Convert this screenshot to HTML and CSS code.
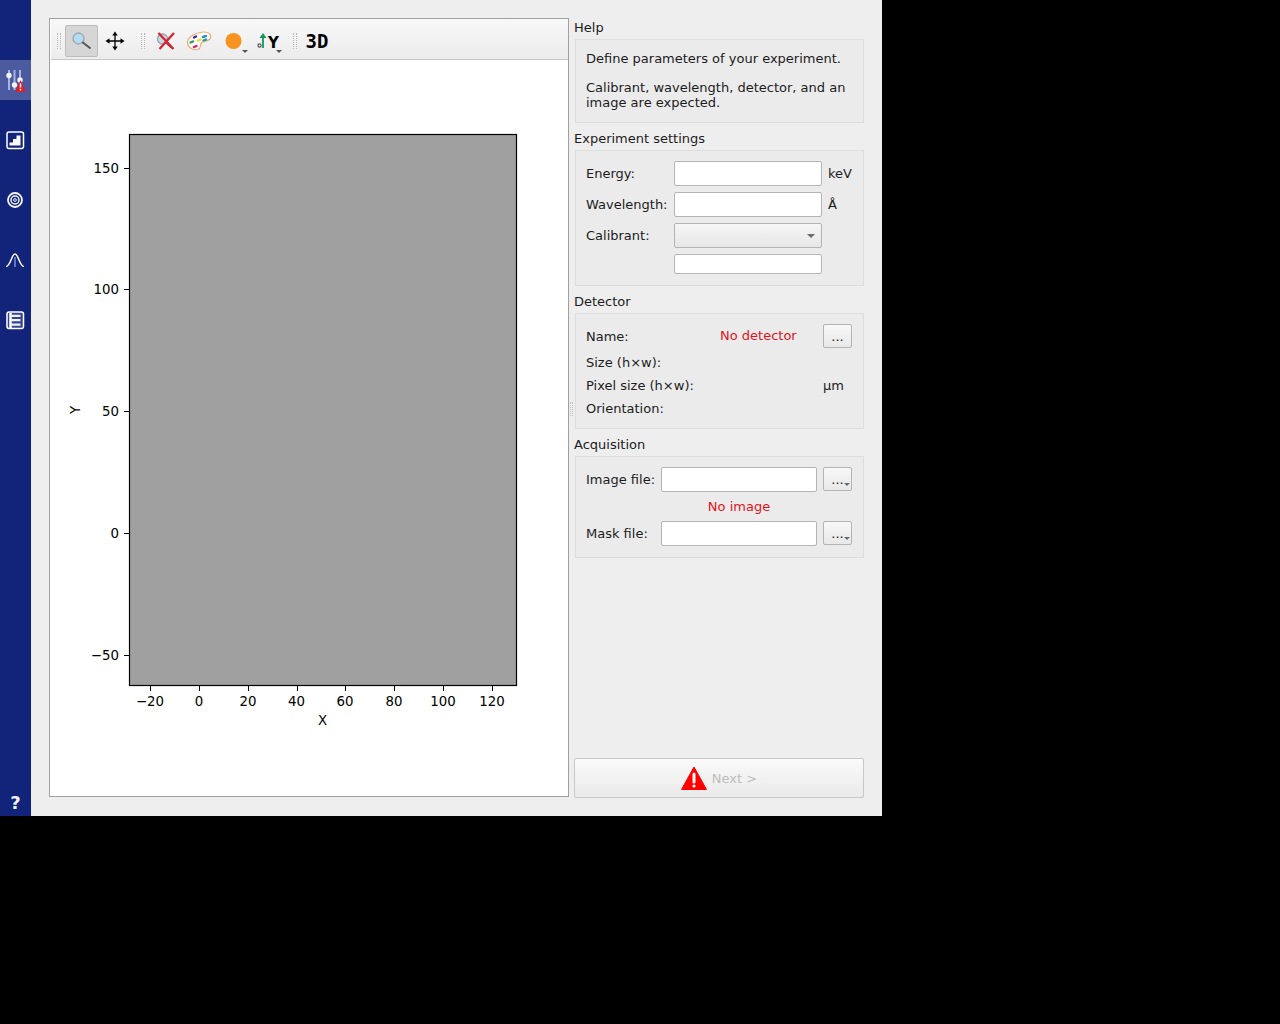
FILE: index.html
```html
<!DOCTYPE html>
<html lang="en">
<head>
<meta charset="utf-8">
<title>Experiment settings</title>
<link rel="stylesheet" href="styles.css">
</head>
<body>
<div class="app">
  <nav class="sidebar">
    <div class="nav-item active">
      <svg width="31" height="40" viewBox="0 0 31 40"><path d="M9 10V30M14.500 10V30M20 10V24" fill="none" stroke="#aab4e0" stroke-width="2"/><g fill="#f2f4fc"><circle cx="9" cy="15.500" r="2.700"/><circle cx="14.500" cy="25" r="2.700"/><circle cx="20" cy="20" r="2.700"/></g><path d="M20.500 20L26 32H15Z" fill="#d8202a"/><path d="M20.500 23.500V27.500M20.500 28.800V30.500" stroke="#fff" stroke-width="1.500"/></svg>
    </div>
    <div class="nav-item">
      <svg width="31" height="40" viewBox="0 0 31 40"><rect x="7" y="12" width="16.500" height="16.500" rx="2" fill="none" stroke="#fff" stroke-width="1.500"/><path d="M9.500 25.500V22.500H13V19H16.500V15.500H20.500V25.500Z" fill="#fff"/></svg>
    </div>
    <div class="nav-item">
      <svg width="31" height="40" viewBox="0 0 31 40"><g fill="none" stroke="#f4f5fc"><circle cx="15" cy="20" r="7" stroke-width="1.800"/><circle cx="15" cy="20" r="4" stroke-width="1.500"/><circle cx="15" cy="20" r="1.400" stroke-width="1"/></g></svg>
    </div>
    <div class="nav-item">
      <svg width="31" height="40" viewBox="0 0 31 40"><path d="M15 17V27" stroke="#8090d0" stroke-width="1.500"/><path d="M6 26.500C10.500 26.500 11.500 14 15 14C18.500 14 19.500 26.500 24 26.500" fill="none" stroke="#fff" stroke-width="1.500"/></svg>
    </div>
    <div class="nav-item">
      <svg width="31" height="40" viewBox="0 0 31 40"><rect x="7" y="12" width="16.500" height="16.500" rx="2" fill="#34458f" stroke="#fff" stroke-width="1.500"/><path d="M10.500 13V28" stroke="#fff" stroke-width="2.500"/><path d="M11 15.800H20.500M11 20.200H20.500M11 24.600H20.500" stroke="#f0f2fb" stroke-width="2.200"/></svg>
    </div>
    <div class="help-mark">?</div>
  </nav>

  <main class="workspace">
    <section class="plot-frame">
      <div class="toolbar">
        <span class="handle first"></span>
        <span class="tool pressed">
          <svg width="22" height="22" viewBox="0 0 22 22"><circle cx="7.500" cy="8.500" r="5.500" fill="#b4dcf2" stroke="#9aa6ae" stroke-width="1.300"/><path d="M11.800 12.500L19 18" stroke="#555" stroke-width="2" stroke-linecap="round"/></svg>
        </span>
        <span class="tool">
          <svg width="22" height="22" viewBox="1 0 22 22"><path d="M11 3.500V18.500M3.500 11H18.500" stroke="#000" stroke-width="1.300"/><path d="M11 1.500L8.300 5.500H13.700ZM11 20.500L8.300 16.500H13.700ZM1.500 11L5.500 8.300V13.700ZM20.500 11L16.500 8.300V13.700Z" fill="#000"/></svg>
        </span>
        <span class="handle"></span>
        <span class="tool">
          <svg width="22" height="22" viewBox="0 0 22 22"><circle cx="7.500" cy="9" r="5" fill="#c6dbe8" stroke="#9aa3aa" stroke-width="1.300"/><path d="M11.500 13L17 18" stroke="#555" stroke-width="2"/><path d="M3.500 3L18.500 19M19 3L4.500 19" stroke="#d8232f" stroke-width="2.300"/></svg>
        </span>
        <span class="tool">
          <svg width="26" height="20" viewBox="1 0 26 20"><path d="M1.500 12C1 7 9 1.500 17 1C23 .7 25.500 3.500 24.500 7C23.500 10.500 18 9.500 15.500 12C13.500 14 15.500 17 12 18.500C7.500 19.500 2 17 1.500 12Z" fill="#fffdf8" stroke="#eaa76f" stroke-width="1.100"/><g stroke-width="2.400" stroke-linecap="round"><path d="M8 6.500L10 5.500" stroke="#3a2a9c"/><path d="M17 6L20 5" stroke="#2a8fd0"/><path d="M12 9.500L14.500 8.500" stroke="#e8dc20"/><path d="M4.500 11.500L7 10.500" stroke="#20a060"/><path d="M17.500 9.500L20 8.500" stroke="#20a0a0"/><path d="M8 16L10.500 15" stroke="#d02070"/></g></svg>
        </span>
        <span class="tool">
          <svg width="33" height="32" viewBox="0 0 33 32"><circle cx="16.500" cy="16" r="8" fill="#f7931e"/><path d="M25 25H31L28 28Z" fill="#555"/></svg>
        </span>
        <span class="tool">
          <svg width="33" height="32" viewBox="0 0 33 32"><path d="M12 12V23" stroke="#0e9a58" stroke-width="1.800"/><path d="M12 8L8.500 13H15.500Z" fill="#0e9a58"/><circle cx="8.500" cy="20.500" r="1.600" fill="none" stroke="#555" stroke-width="1.200"/><text class="axis-y" x="17" y="23">Y</text><path d="M25 25H31L28 28Z" fill="#555"/></svg>
        </span>
        <span class="handle last"></span>
        <span class="tool-3d">3D</span>
      </div>
      <svg class="plot" width="518" height="736" viewBox="50 60 518 736">
        <rect x="129.500" y="134.500" width="387" height="551" fill="#a0a0a0" stroke="#000" stroke-width="1.200"/>
        <g stroke="#000" stroke-width="1">
          <path d="M150.500 686V691M199.500 686V691M248.500 686V691M297.500 686V691M345.500 686V691M394.500 686V691M443.500 686V691M492.500 686V691"/>
          <path d="M124 168.500H129M124 289.500H129M124 411.500H129M124 533.500H129M124 655.500H129"/>
        </g>
        <g class="tick-x">
          <text x="150" y="706">−20</text><text x="199" y="706">0</text><text x="248" y="706">20</text><text x="296.500" y="706">40</text><text x="345" y="706">60</text><text x="394" y="706">80</text><text x="443" y="706">100</text><text x="492" y="706">120</text>
        </g>
        <g class="tick-y">
          <text x="119" y="173">150</text><text x="119" y="294">100</text><text x="119" y="416">50</text><text x="119" y="538">0</text><text x="119" y="660">−50</text>
        </g>
        <text class="tick-x" x="322.500" y="725">X</text>
        <text class="tick-x" transform="translate(80 410) rotate(-90)">Y</text>
      </svg>
    </section>

    <div class="splitter"><span class="grip"></span></div>

    <aside class="panel">
      <h2 class="group-title">Help</h2>
      <div class="group help-box">
        <p>Define parameters of your experiment.</p>
        <p>Calibrant, wavelength, detector, and an image are expected.</p>
      </div>

      <h2 class="group-title">Experiment settings</h2>
      <div class="group exp-grid">
        <span>Energy:</span><input class="field"><span>keV</span>
        <span>Wavelength:</span><input class="field"><span>Å</span>
        <span>Calibrant:</span><div class="combo"><i class="caret"></i></div><span></span>
        <span></span><input class="field short"><span></span>
      </div>

      <h2 class="group-title">Detector</h2>
      <div class="group detector">
        <div class="det-row first-row"><span class="det-label">Name:</span><span class="error det-value">No detector</span><button class="dots">...</button></div>
        <div class="det-row"><span class="det-label">Size (h×w):</span></div>
        <div class="det-row"><span class="det-label">Pixel size (h×w):</span><span class="det-value"></span><span class="det-unit">µm</span></div>
        <div class="det-row"><span class="det-label">Orientation:</span></div>
      </div>

      <h2 class="group-title">Acquisition</h2>
      <div class="group acq-grid">
        <span>Image file:</span><input class="field"><button class="dots menu">...<i class="mini-caret"></i></button>
        <span></span><span class="error centered">No image</span><span></span>
        <span>Mask file:</span><input class="field"><button class="dots menu">...<i class="mini-caret"></i></button>
      </div>

      <button class="next">
        <svg width="26" height="24" viewBox="0 0 26 24"><path d="M13 1L25.500 23.500H0.500Z" fill="#f00" stroke="#f00" stroke-linejoin="round"/><path d="M13 8V16" stroke="#fff" stroke-width="3" stroke-linecap="round"/><circle cx="13" cy="20" r="1.600" fill="#fff"/></svg>
        <span>Next &gt;</span>
      </button>
    </aside>
  </main>
</div>
</body>
</html>
```
FILE: styles.css
```css
html, body {
  margin: 0;
  height: 100%;
  background: #000;
}
body {
  font-family: "DejaVu Sans", sans-serif;
  font-size: 13px;
  color: #1c1c1c;
}
.app {
  display: flex;
  width: 882px;
  height: 816px;
  background: #eeeeee;
}
.sidebar {
  width: 31px;
  flex: none;
  background: #12247a;
  display: flex;
  flex-direction: column;
  gap: 20px;
  padding-top: 60px;
  box-sizing: border-box;
}
.nav-item {
  height: 40px;
}
.nav-item svg {
  display: block;
}
.nav-item.active {
  background: #4c5ba0;
}
.help-mark {
  margin-top: auto;
  height: 24px;
  text-align: center;
  font-weight: bold;
  font-size: 18px;
  line-height: 22px;
  color: #f2f2f2;
}
.workspace {
  flex: 1;
  display: flex;
  padding: 18px 18px 19px 18px;
  box-sizing: border-box;
}
.plot-frame {
  width: 520px;
  flex: none;
  box-sizing: border-box;
  border: 1px solid #a0a0a0;
  background: #fff;
}
.toolbar {
  margin-left: 1px;
  height: 41px;
  box-sizing: border-box;
  display: flex;
  align-items: center;
  gap: 1px;
  padding: 4px 0 0 6px;
  background: linear-gradient(#f8f8f8, #ececec);
  border-bottom: 1px solid #c6c6c6;
}
.handle {
  width: 4px;
  height: 16px;
  margin: 0 3px 0 0;
  border-left: 1px dotted #b8b8b8;
  border-right: 1px dotted #b8b8b8;
  box-sizing: border-box;
}
.toolbar .handle:not(.first) {
  margin: 0 3px 0 8px;
}
.toolbar .handle.last {
  margin: 0 2px 0 8px;
}
.tool {
  width: 33px;
  height: 32px;
  box-sizing: border-box;
  display: flex;
  align-items: center;
  justify-content: center;
}
.tool.pressed {
  background: #d6d6d6;
  border: 1px solid #bdbdbd;
  border-radius: 2px;
}
.tool-3d {
  width: 34px;
  text-align: center;
  font-family: "DejaVu Sans Mono", monospace;
  font-weight: bold;
  font-size: 19px;
  color: #000;
}
.axis-y {
  font-family: "DejaVu Sans", sans-serif;
  font-weight: bold;
  font-size: 15px;
  fill: #000;
}
.plot {
  display: block;
}
.plot text {
  font-family: "DejaVu Sans", sans-serif;
  font-size: 13.33px;
  fill: #000;
}
.tick-x {
  text-anchor: middle;
}
.tick-y {
  text-anchor: end;
}
.splitter {
  width: 5px;
  flex: none;
  display: flex;
  align-items: center;
  justify-content: center;
  padding-top: 3px;
}
.grip {
  width: 3px;
  height: 14px;
  box-sizing: border-box;
  border-left: 1px dotted #c0c0c0;
  border-right: 1px dotted #c0c0c0;
}
.panel {
  width: 290px;
  flex: none;
  display: flex;
  flex-direction: column;
  padding-top: 2px;
  margin-bottom: -1px;
  box-sizing: border-box;
}
.group-title {
  margin: 0;
  height: 19px;
  font-size: 13px;
  font-weight: normal;
  line-height: 15px;
}
.group {
  margin: 0 0 8px 1px;
  width: 289px;
  box-sizing: border-box;
  border: 1px solid #dddddd;
  background: #ebebeb;
}
.help-box {
  height: 84px;
  padding: 11px 10px 0;
  line-height: 15px;
}
.help-box p {
  margin: 0 0 14px;
}
.exp-grid {
  height: 136px;
  padding: 10px 0 0 10px;
  display: grid;
  grid-template-columns: 88px 148px auto;
  grid-template-rows: 25px 25px 25px 20px;
  row-gap: 6px;
  align-items: center;
}
.exp-grid > span:nth-child(3n) {
  padding-left: 6px;
}
.field {
  display: block;
  width: 100%;
  height: 25px;
  margin: 0;
  padding: 0;
  box-sizing: border-box;
  border: 1px solid #b4b4b4;
  border-radius: 2px;
  background: #fff;
}
.field.short {
  height: 20px;
  margin-top: -1px;
}
.combo {
  height: 25px;
  box-sizing: border-box;
  border: 1px solid #b4b4b4;
  border-radius: 2px;
  background: linear-gradient(#f6f6f6, #e6e6e6);
  display: flex;
  align-items: center;
  justify-content: flex-end;
  padding-right: 6px;
}
.caret {
  width: 0;
  height: 0;
  border-left: 4px solid transparent;
  border-right: 4px solid transparent;
  border-top: 4px solid #6a6a6a;
}
.detector {
  height: 116px;
  padding: 10px 11px 0 10px;
}
.det-row {
  display: flex;
  align-items: center;
  height: 23px;
}
.det-row.first-row {
  height: 24px;
  margin-bottom: 3px;
}
.det-label {
  width: 134px;
  flex: none;
  white-space: nowrap;
}
.det-value {
  width: 103px;
  flex: none;
  padding-bottom: 2px;
  box-sizing: border-box;
}
.det-unit {
  flex: none;
}
.error {
  color: #e3121c;
}
.dots {
  width: 29px;
  height: 24px;
  padding: 0;
  box-sizing: border-box;
  border: 1px solid #b4b4b4;
  border-radius: 2px;
  background: linear-gradient(#f8f8f8, #e8e8e8);
  font-family: "DejaVu Sans", sans-serif;
  font-size: 13px;
  color: #1c1c1c;
  position: relative;
}
.mini-caret {
  position: absolute;
  right: 1px;
  bottom: 4px;
  width: 0;
  height: 0;
  border-left: 3px solid transparent;
  border-right: 3px solid transparent;
  border-top: 3px solid #6a6a6a;
}
.acq-grid {
  height: 102px;
  padding: 10px 11px 0 10px;
  display: grid;
  grid-template-columns: 75px 156px 35px;
  grid-template-rows: 25px 29px 25px;
  align-items: center;
}
.acq-grid .dots {
  margin-left: 6px;
  align-self: start;
}
.centered {
  text-align: center;
}
.next {
  margin-top: auto;
  height: 40px;
  width: 290px;
  box-sizing: border-box;
  border: 1px solid #c8c8c8;
  border-radius: 2px;
  background: linear-gradient(#fafafa, #eaeaea);
  display: flex;
  align-items: center;
  justify-content: center;
  gap: 5px;
  font-family: "DejaVu Sans", sans-serif;
  font-size: 13px;
  color: #bcbcbc;
  padding: 0;
}
```
